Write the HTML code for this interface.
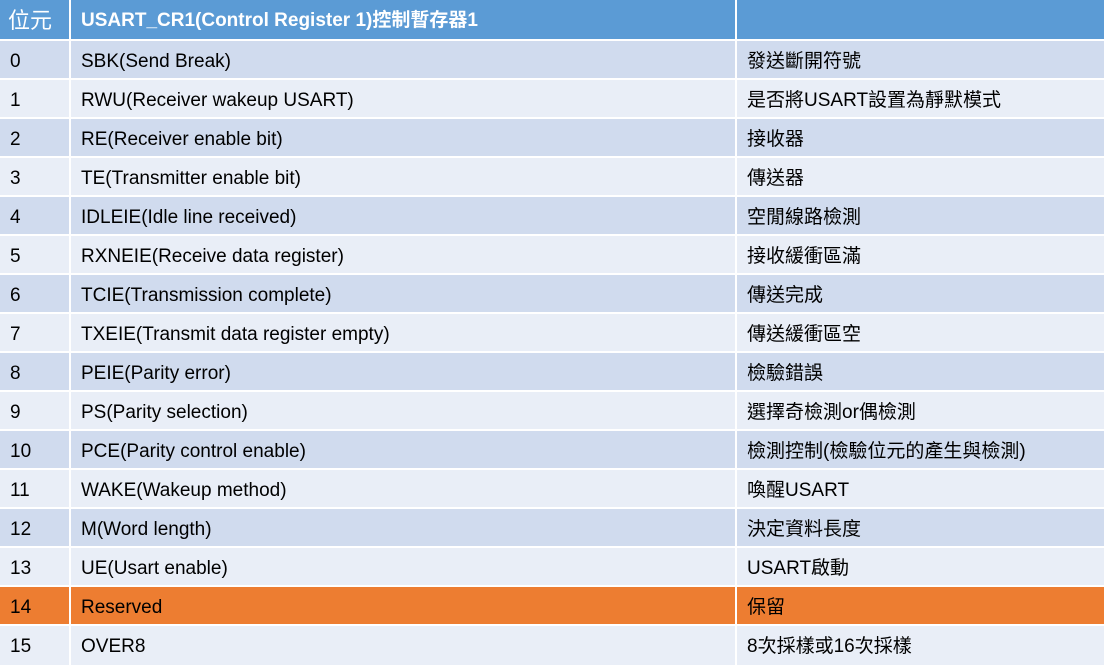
<!DOCTYPE html><html><head><meta charset="utf-8"><style>
body{margin:0;width:1104px;height:665px;background:#fff;overflow:hidden;font-family:"Liberation Sans","Noto Sans CJK TC",sans-serif;font-size:19px;color:#000}
.r{position:absolute;left:0;width:1104px;height:37px}
.c{position:absolute;top:0;height:37px;line-height:41px;padding-left:10px;box-sizing:border-box;white-space:nowrap;overflow:hidden}
.a{left:0;width:69px}.b{left:71px;width:664px}.d{left:737px;width:367px}
.h .c{background:#5b9bd5;color:#fff;font-weight:bold;height:39px;line-height:41px}
.h .a{font-weight:normal;font-size:22px;padding-left:8px}
.e .c{background:#d0dbee}.f .c{background:#e9eef7}.o .c{background:#ed7d31}
.d{font-family:"Liberation Sans","Noto Sans CJK TC",sans-serif;line-height:41px}
</style></head><body>
<div class="r h" style="top:0"><div class="c a">位元</div><div class="c b">USART_CR1(Control Register 1)控制暫存器1</div><div class="c d"></div></div>
<div class="r e" style="top:41px"><div class="c a">0</div><div class="c b">SBK(Send Break)</div><div class="c d">發送斷開符號</div></div>
<div class="r f" style="top:80px"><div class="c a">1</div><div class="c b">RWU(Receiver wakeup USART)</div><div class="c d">是否將USART設置為靜默模式</div></div>
<div class="r e" style="top:119px"><div class="c a">2</div><div class="c b">RE(Receiver enable bit)</div><div class="c d">接收器</div></div>
<div class="r f" style="top:158px"><div class="c a">3</div><div class="c b">TE(Transmitter enable bit)</div><div class="c d">傳送器</div></div>
<div class="r e" style="top:197px"><div class="c a">4</div><div class="c b">IDLEIE(Idle line received)</div><div class="c d">空閒線路檢測</div></div>
<div class="r f" style="top:236px"><div class="c a">5</div><div class="c b">RXNEIE(Receive data register)</div><div class="c d">接收緩衝區滿</div></div>
<div class="r e" style="top:275px"><div class="c a">6</div><div class="c b">TCIE(Transmission complete)</div><div class="c d">傳送完成</div></div>
<div class="r f" style="top:314px"><div class="c a">7</div><div class="c b">TXEIE(Transmit data register empty)</div><div class="c d">傳送緩衝區空</div></div>
<div class="r e" style="top:353px"><div class="c a">8</div><div class="c b">PEIE(Parity error)</div><div class="c d">檢驗錯誤</div></div>
<div class="r f" style="top:392px"><div class="c a">9</div><div class="c b">PS(Parity selection)</div><div class="c d">選擇奇檢測or偶檢測</div></div>
<div class="r e" style="top:431px"><div class="c a">10</div><div class="c b">PCE(Parity control enable)</div><div class="c d">檢測控制(檢驗位元的產生與檢測)</div></div>
<div class="r f" style="top:470px"><div class="c a">11</div><div class="c b">WAKE(Wakeup method)</div><div class="c d">喚醒USART</div></div>
<div class="r e" style="top:509px"><div class="c a">12</div><div class="c b">M(Word length)</div><div class="c d">決定資料長度</div></div>
<div class="r f" style="top:548px"><div class="c a">13</div><div class="c b">UE(Usart enable)</div><div class="c d">USART啟動</div></div>
<div class="r o" style="top:587px"><div class="c a">14</div><div class="c b">Reserved</div><div class="c d">保留</div></div>
<div class="r f" style="top:626px;height:39px"><div class="c a" style="height:39px">15</div><div class="c b" style="height:39px">OVER8</div><div class="c d" style="height:39px">8次採樣或16次採樣</div></div>
</body></html>
